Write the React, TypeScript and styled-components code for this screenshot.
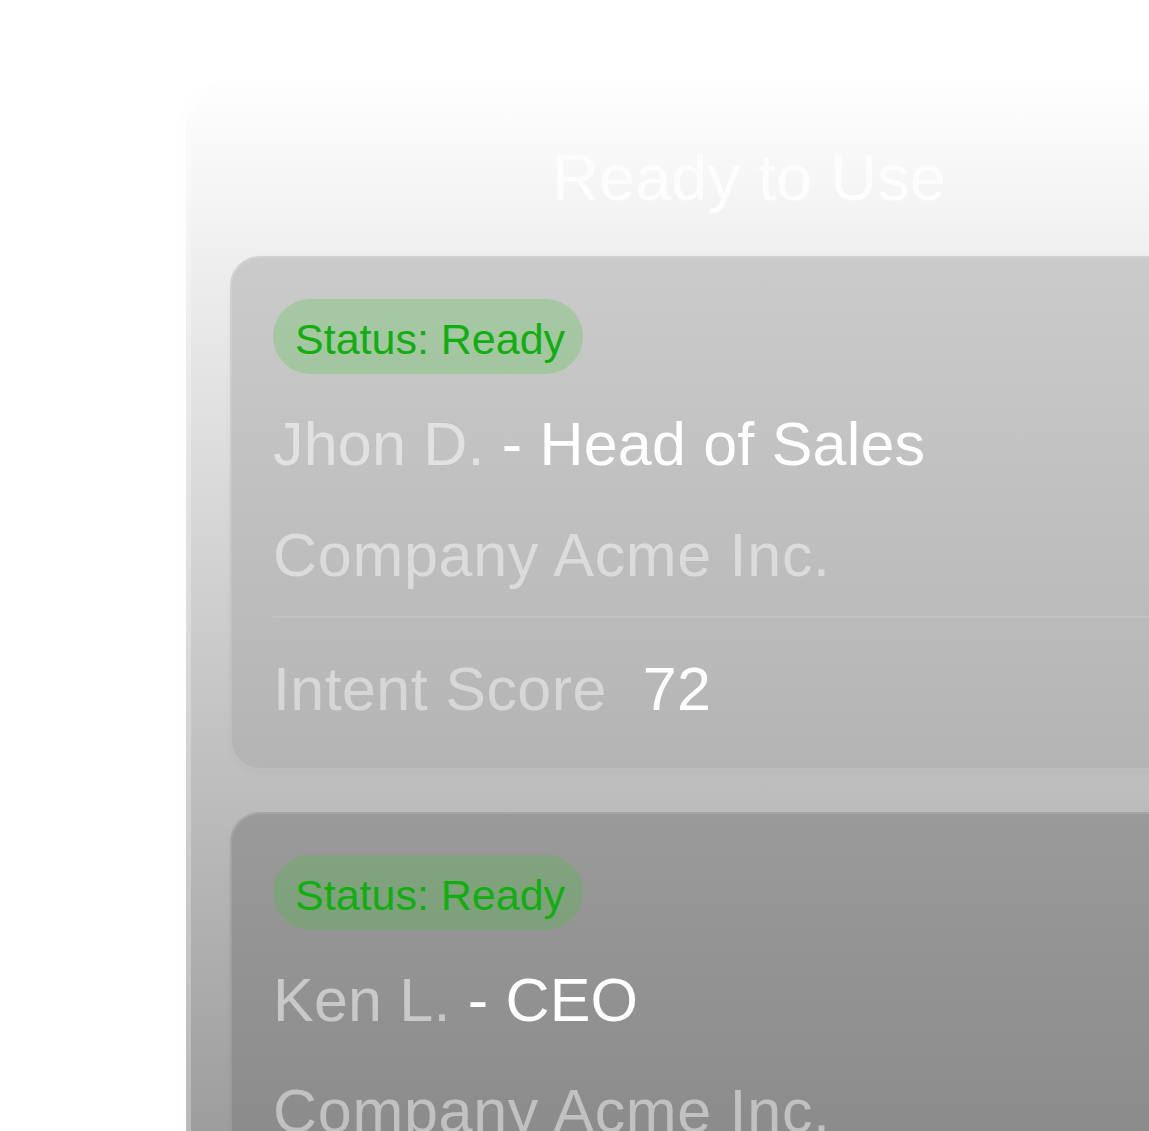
import React from "react";
import styled, { createGlobalStyle } from "styled-components";

const GlobalStyle = createGlobalStyle`
  html, body {
    margin: 0;
    padding: 0;
    background: #ffffff;
    overflow: hidden;
  }
  body {
    font-family: "Liberation Sans", Arial, sans-serif;
  }
  * { box-sizing: border-box; }
`;

const Stage = styled.div`
  width: 100vw;
  height: 1131px;
  overflow: hidden;
  padding: 80px 0 0 186px;
  display: flex;
  align-items: flex-start;
  background: #ffffff;
`;

const Panel = styled.section`
  flex-shrink: 0;
  width: 1126px;
  border: 5px solid rgba(255, 255, 255, 0.28);
  border-bottom: none;
  border-radius: 52px 52px 0 0;
  padding: 60px 39px 44px;
  background: linear-gradient(180deg, #fefefe 0px, #f6f6f6 100px, #878787 1290px);
  background-origin: border-box;
  background-repeat: no-repeat;
  box-shadow: -10px 0 20px rgba(0, 0, 0, 0.008);
  display: flex;
  flex-direction: column;
  gap: 42px;
`;

const Title = styled.h1`
  margin: 0 0 4px;
  text-align: center;
  font-size: 65px;
  line-height: 1;
  font-weight: 400;
  color: #fdfdfd;
  white-space: nowrap;
`;

const Card = styled.article<{ $tone: "light" | "dark" }>`
  border: 2px solid rgba(255, 255, 255, 0.12);
  border-radius: 30px;
  padding: 41px 41px 47px;
  height: 514px;
  flex-shrink: 0;
  background: ${(p) =>
    p.$tone === "light"
      ? "linear-gradient(180deg, #cbcbcb 0%, #b4b4b4 100%)"
      : "linear-gradient(180deg, #9a9a9a 0%, #838383 100%)"};
  background-origin: border-box;
  box-shadow: 0 2px 6px rgba(0, 0, 0, 0.03);
  display: flex;
  flex-direction: column;
  align-items: flex-start;
`;

const Badge = styled.span`
  display: inline-block;
  width: 310px;
  height: 75px;
  padding: 19px 0 0 22px;
  border-radius: 38px;
  background: rgba(61, 201, 49, 0.25);
  color: #10ae10;
  font-size: 43px;
  line-height: 1;
  white-space: nowrap;
`;

const Line = styled.div<{ $gap: number; $spacing: number }>`
  margin-top: ${(p) => p.$gap}px;
  font-size: 61px;
  line-height: 1;
  letter-spacing: ${(p) => p.$spacing}px;
  white-space: nowrap;
  color: rgba(255, 255, 255, 0.46);
`;

const Strong = styled.span`
  color: #ffffff;
`;

const Muted = styled.span`
  color: rgba(255, 255, 255, 0.5);
`;

const Divider = styled.hr`
  align-self: stretch;
  margin: 30px 0 0;
  border: none;
  height: 2px;
  background: rgba(255, 255, 255, 0.1);
`;

const ScoreRow = styled.div`
  margin-top: 41px;
  display: flex;
  gap: 36px;
  font-size: 61px;
  line-height: 1;
  letter-spacing: 0.4px;
  white-space: nowrap;
`;

const ScoreLabel = styled.span`
  color: rgba(255, 255, 255, 0.44);
`;

const ScoreValue = styled.span`
  color: #ffffff;
`;

type Lead = {
  name: string;
  role: string;
  company: string;
  score: number;
  tone: "light" | "dark";
};

const leads: Lead[] = [
  { name: "Jhon D.", role: "Head of Sales", company: "Company Acme Inc.", score: 72, tone: "light" },
  { name: "Ken L.", role: "CEO", company: "Company Acme Inc.", score: 88, tone: "dark" },
];

export default function App() {
  return (
    <>
      <GlobalStyle />
      <Stage>
        <Panel>
          <Title>Ready to Use</Title>
          {leads.map((l) => (
            <Card key={l.name} $tone={l.tone}>
              <Badge>Status: Ready</Badge>
              <Line $gap={40} $spacing={0.2}>
                <Muted>{l.name}</Muted>
                <Strong> - {l.role}</Strong>
              </Line>
              <Line $gap={50} $spacing={0.7}>{l.company}</Line>
              <Divider />
              <ScoreRow>
                <ScoreLabel>Intent Score</ScoreLabel>
                <ScoreValue>{l.score}</ScoreValue>
              </ScoreRow>
            </Card>
          ))}
        </Panel>
      </Stage>
    </>
  );
}
